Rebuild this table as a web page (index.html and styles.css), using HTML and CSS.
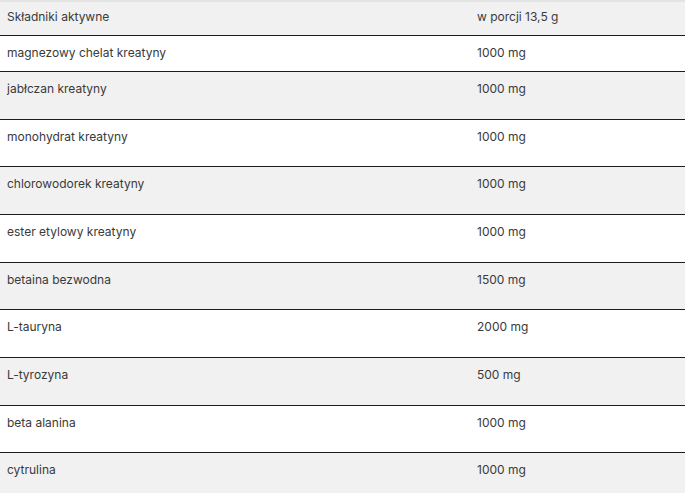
FILE: index.html
```html
<!DOCTYPE html>
<html lang="pl">
<head>
<meta charset="utf-8">
<title>Składniki aktywne</title>
<link rel="stylesheet" href="styles.css">
</head>
<body>
<table class="ingredients">
  <colgroup><col class="col-name"><col class="col-amount"></colgroup>
  <thead>
    <tr class="row head"><th>Składniki aktywne</th><th>w porcji 13,5 g</th></tr>
  </thead>
  <tbody>
    <tr class="row white"><td>magnezowy chelat kreatyny</td><td>1000 mg</td></tr>
    <tr class="row gray tall"><td>jabłczan kreatyny</td><td>1000 mg</td></tr>
    <tr class="row white tall"><td>monohydrat kreatyny</td><td>1000 mg</td></tr>
    <tr class="row gray tall"><td>chlorowodorek kreatyny</td><td>1000 mg</td></tr>
    <tr class="row white tall"><td>ester etylowy kreatyny</td><td>1000 mg</td></tr>
    <tr class="row gray tall"><td>betaina bezwodna</td><td>1500 mg</td></tr>
    <tr class="row white tall"><td>L-tauryna</td><td>2000 mg</td></tr>
    <tr class="row gray tall"><td>L-tyrozyna</td><td>500 mg</td></tr>
    <tr class="row white tall"><td>beta alanina</td><td>1000 mg</td></tr>
    <tr class="row gray tall"><td>cytrulina</td><td>1000 mg</td></tr>
  </tbody>
</table>
</body>
</html>
```

FILE: styles.css
```css
html, body {
  margin: 0;
  padding: 0;
  background: #ffffff;
}

.ingredients {
  width: 685px;
  border-collapse: collapse;
  table-layout: fixed;
  font-family: Inter, "Open Sans", "Liberation Sans", sans-serif;
  font-size: 12px;
  line-height: 14px;
  color: #3a3a3a;
  border-top: 2px solid #e4e4e4;
}

.col-name { width: 470px; }
.col-amount { width: 215px; }

.ingredients th,
.ingredients td {
  text-align: left;
  font-weight: 400;
  vertical-align: top;
  padding: 10px 7px 11px 7px;
  border-bottom: 1px solid #1c1c1c;
}

.row.head th { padding-top: 8px; padding-bottom: 11px; }

.row.head { background: #f1f1f1; }
.row.gray { background: #f1f1f1; }
.row.white { background: #ffffff; }

.row.tall td { padding-bottom: 22.67px; }

.ingredients tbody tr:last-child td { border-bottom: none; }
```
